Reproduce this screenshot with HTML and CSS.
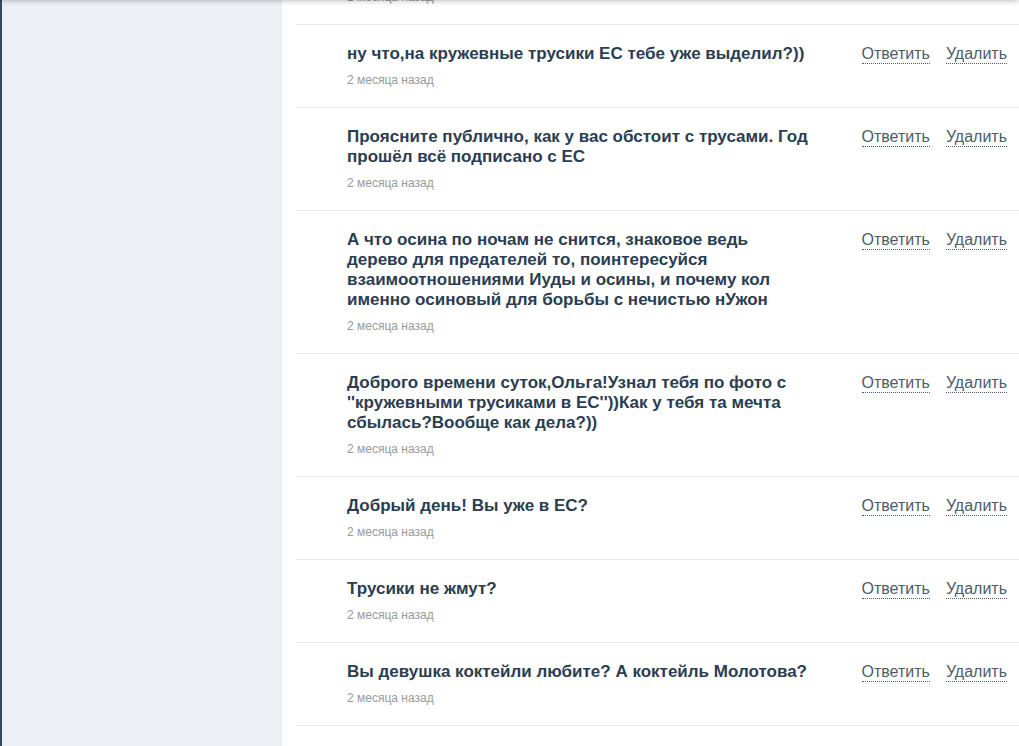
FILE: index.html
```html
<!DOCTYPE html>
<html lang="ru">
<head>
<meta charset="utf-8">
<title>Комментарии</title>
<link rel="stylesheet" href="styles.css">
</head>
<body>
<div class="topshadow"></div>
<aside class="sidebar"></aside>
<main class="main">
  <ul class="comments">
    <li class="comment comment--cut">
      <div class="body">
        <span class="date">2 месяца назад</span>
      </div>
    </li>
    <li class="comment">
      <div class="body">
        <p class="text">ну что,на кружевные трусики ЕС тебе уже выделил?))</p>
        <span class="date">2 месяца назад</span>
      </div>
      <div class="actions"><a href="#" class="act">Ответить</a><a href="#" class="act">Удалить</a></div>
    </li>
    <li class="comment">
      <div class="body">
        <p class="text">Проясните публично, как у вас обстоит с трусами. Год прошёл всё подписано с ЕС</p>
        <span class="date">2 месяца назад</span>
      </div>
      <div class="actions"><a href="#" class="act">Ответить</a><a href="#" class="act">Удалить</a></div>
    </li>
    <li class="comment">
      <div class="body">
        <p class="text">А что осина по ночам не снится, знаковое ведь дерево для предателей то, поинтересуйся взаимоотношениями Иуды и осины, и почему кол именно осиновый для борьбы с нечистью нУжон</p>
        <span class="date">2 месяца назад</span>
      </div>
      <div class="actions"><a href="#" class="act">Ответить</a><a href="#" class="act">Удалить</a></div>
    </li>
    <li class="comment">
      <div class="body">
        <p class="text">Доброго времени суток,Ольга!Узнал тебя по фото с ''кружевными трусиками в ЕС''))Как у тебя та мечта сбылась?Вообще как дела?))</p>
        <span class="date">2 месяца назад</span>
      </div>
      <div class="actions"><a href="#" class="act">Ответить</a><a href="#" class="act">Удалить</a></div>
    </li>
    <li class="comment">
      <div class="body">
        <p class="text">Добрый день! Вы уже в ЕС?</p>
        <span class="date">2 месяца назад</span>
      </div>
      <div class="actions"><a href="#" class="act">Ответить</a><a href="#" class="act">Удалить</a></div>
    </li>
    <li class="comment">
      <div class="body">
        <p class="text">Трусики не жмут?</p>
        <span class="date">2 месяца назад</span>
      </div>
      <div class="actions"><a href="#" class="act">Ответить</a><a href="#" class="act">Удалить</a></div>
    </li>
    <li class="comment">
      <div class="body">
        <p class="text">Вы девушка коктейли любите? А коктейль Молотова?</p>
        <span class="date">2 месяца назад</span>
      </div>
      <div class="actions"><a href="#" class="act">Ответить</a><a href="#" class="act">Удалить</a></div>
    </li>
  </ul>
</main>
</body>
</html>
```

FILE: styles.css
```css
html, body {
  margin: 0;
  padding: 0;
  height: 100%;
  overflow: hidden;
}
body {
  display: flex;
  font-family: "Liberation Sans", Arial, sans-serif;
  background: #fff;
}
.topshadow {
  position: fixed;
  left: 0;
  right: 0;
  top: -40px;
  height: 40px;
  background: #fff;
  box-shadow: 0 0 6px rgba(0, 0, 0, 0.35);
  z-index: 5;
}
.sidebar {
  flex: 0 0 282px;
  background: #edf1f5;
  border-left: 2px solid #34495e;
  border-right: 1px solid #e6eaee;
  box-sizing: border-box;
}
.main {
  flex: 1;
  padding-left: 14px;
  background: #fff;
  min-width: 0;
}
.comments {
  list-style: none;
  margin: -30px 0 0 0;
  padding: 0;
  border-bottom: 1px solid #e8e8e8;
}
.comment {
  display: flex;
  justify-content: space-between;
  border-top: 1px solid #e8e8e8;
  padding: 19px 12px 19px 51px;
}
.comment--cut {
  border-top: none;
}
.body {
  display: flex;
  flex-direction: column;
  gap: 8px;
}
.text {
  margin: 0;
  width: 466px;
  font-size: 17px;
  line-height: 20px;
  font-weight: bold;
  color: #2b3d51;
}
.date {
  font-size: 12px;
  line-height: 16px;
  color: #999;
}
.actions {
  display: flex;
  gap: 16px;
  height: 20px;
}
.act {
  font-size: 16px;
  line-height: 20px;
  color: #4e5c6a;
  text-decoration: none;
  border-bottom: 1px dotted #4e5c6a;
  height: 19px;
}
```
